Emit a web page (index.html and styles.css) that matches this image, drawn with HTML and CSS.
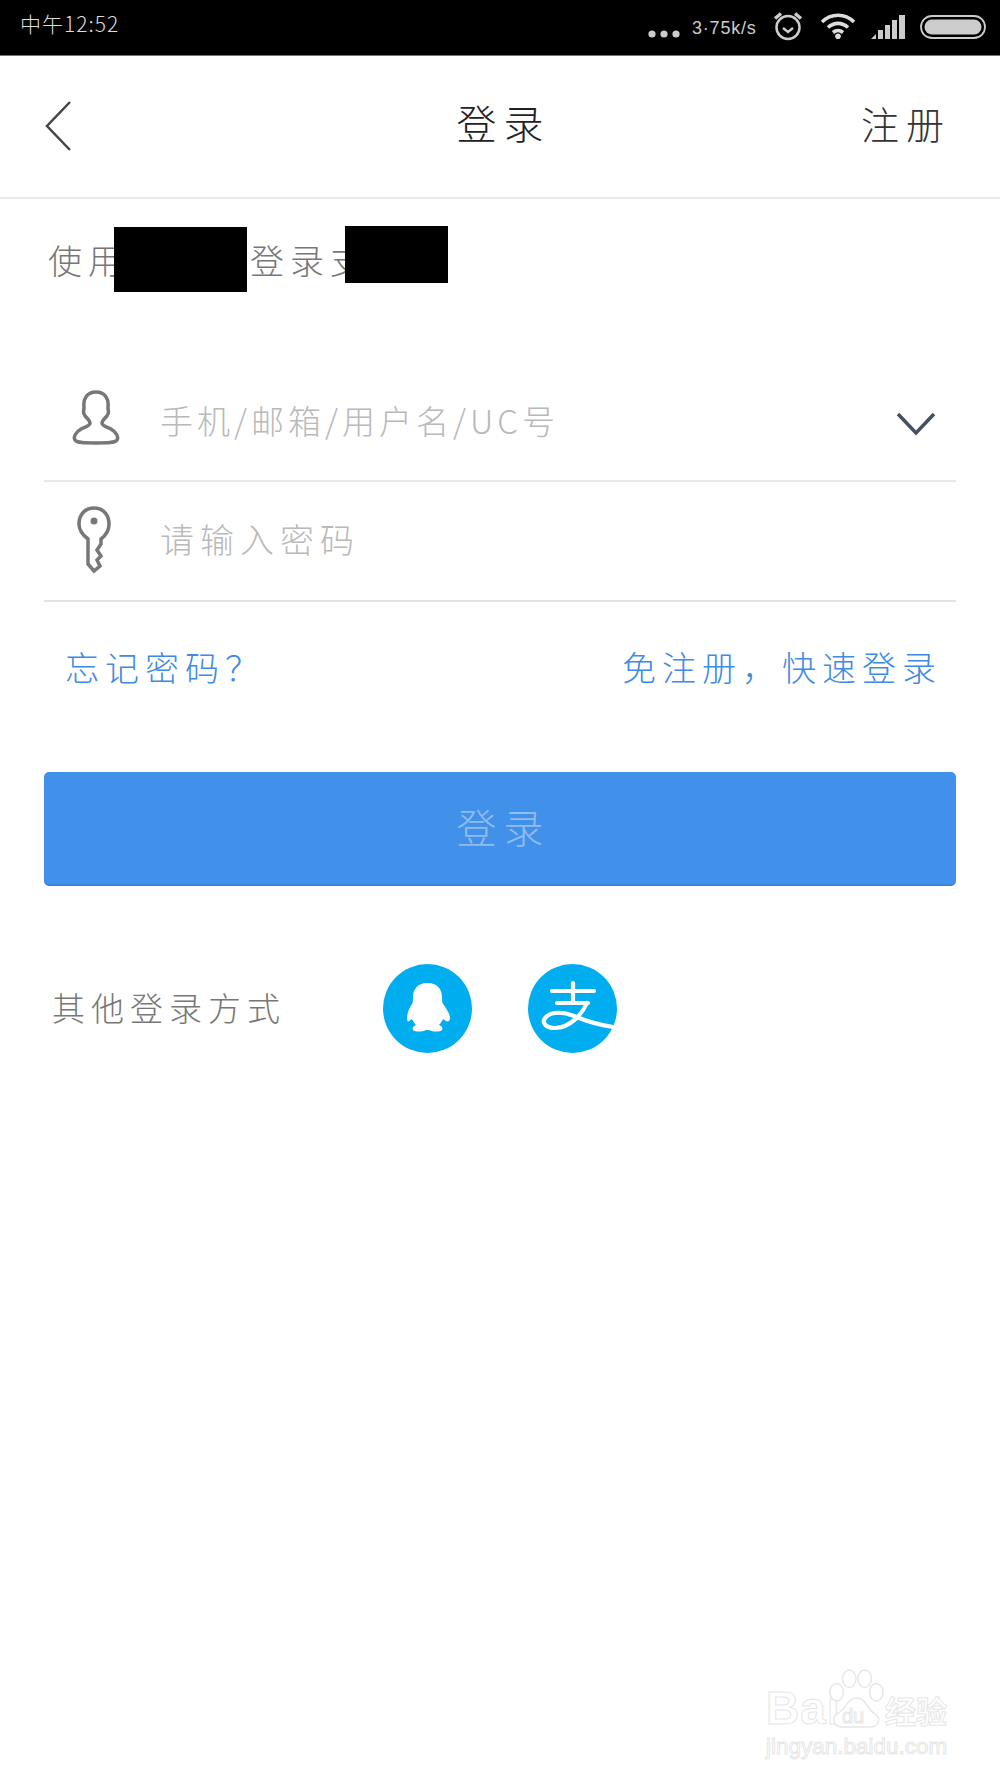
FILE: index.html
```html
<!DOCTYPE html>
<html lang="zh">
<head>
<meta charset="utf-8">
<title>登录</title>
<link rel="stylesheet" href="styles.css">
</head>
<body>
<div class="page">
  <header class="status">
    <div class="time">中午12:52</div>
    <div class="status-right">
      <svg class="dots" viewBox="0 0 32 8"><circle cx="4" cy="4" r="3.6"/><circle cx="16" cy="4" r="3.6"/><circle cx="28" cy="4" r="3.6"/></svg>
      <span class="speed">3·75k/s</span>
      <svg class="alarm" viewBox="0 0 30 30"><circle cx="15" cy="16.500" r="11.500"/><path d="M10 17l5 4 5-4"/><path class="thick" d="M2 7.500L8 2.500M28 7.500L22 2.500"/></svg>
      <svg class="wifi" viewBox="0 0 36 26"><path d="M2 9C11 0 25 0 34 9"/><path d="M8 14.500C14 9 22 9 28 14.500"/><path d="M13 19.500C16 17 20 17 23 19.500"/><circle cx="18" cy="23.200" r="2.800"/></svg>
      <svg class="signal" viewBox="0 0 35 24"><path d="M0 24L5 19V24Z"/><rect x="7" y="15" width="5" height="9"/><rect x="14" y="10" width="5" height="14"/><rect x="21" y="5" width="5" height="19"/><rect x="28" y="0" width="6" height="24"/></svg>
      <svg class="battery" viewBox="0 0 66 24"><rect x="1" y="1" width="64" height="22" rx="11"/><rect class="fill" x="4.500" y="4.500" width="57" height="15" rx="7.500"/></svg>
    </div>
  </header>

  <nav class="nav">
    <svg class="back" viewBox="0 0 26 50"><path d="M25 1L2 25L25 49"/></svg>
    <h1 class="title">登录</h1>
    <a class="register">注册</a>
  </nav>

  <section class="intro">
    <span>使用</span><span class="intro-gap"></span><span>登录支</span>
    <div class="mask mask-a"></div>
    <div class="mask mask-b"></div>
  </section>

  <form class="form">
    <div class="field field-user">
      <svg class="field-icon" viewBox="0 0 48 56"><path d="M24 2C15 2 11 9 12 17C12 20 11 22 12 24C13 27 18 30 18 33C18 36 13 37 9 39C4 42 1 47 3 50C5 53 12 53 24 53C36 53 43 53 45 50C47 47 44 42 39 39C35 37 30 36 30 33C30 30 35 27 36 24C37 22 36 20 36 17C37 9 33 2 24 2Z"/></svg>
      <span class="placeholder">手机/邮箱/用户名/UC号</span>
      <svg class="caret" viewBox="0 0 40 24"><path d="M2 2L20 21L38 2"/></svg>
    </div>
    <div class="field field-pass">
      <svg class="field-icon" viewBox="0 0 48 68"><path d="M24 2C13 2 9 11 9 18C9 26 14 30 18 33V58L24 65L30 60L27 54L31 50L27 44L31 38V33C35 30 39 26 39 18C39 11 35 2 24 2Z"/><circle class="dot" cx="24" cy="15" r="3.500"/></svg>
      <span class="placeholder">请输入密码</span>
    </div>
  </form>

  <div class="links">
    <a class="link link-forgot">忘记密码？</a>
    <a class="link link-fast">免注册，快速登录</a>
  </div>

  <button class="submit" type="button">登录</button>

  <div class="others">
    <span class="others-label">其他登录方式</span>
    <div class="others-icons">
      <svg class="social" viewBox="0 0 89 89"><circle class="disc" cx="44.500" cy="44.500" r="44.500"/><path class="glyph" d="M44.500 19C34 19 30 26 30 33C30 36 30 38 29 40C26 44 24 50 24 54C24 57 25 58 26 57L29 55C30 57 31 59 33 61C30 62 29 64 30 66C32 68 39 68 43 66L46 66C50 68 57 68 59 66C60 64 59 62 56 61C58 59 59 57 60 55L63 57C65 58 67 57 67 54C67 50 63 44 60 40C59 38 59 36 59 33C59 26 55 19 44.500 19Z"/></svg>
      <svg class="social" viewBox="0 0 89 89"><circle class="disc" cx="44.500" cy="44.500" r="44.500"/><path class="zhi" d="M24 27H66M45 19V39M29 39H60"/><path class="zhi" d="M59 39C54 50 42 64 27 64C17 64 13 58 18 53C24 47 36 48 46 52C58 57 72 61 85 63"/></svg>
    </div>
  </div>

  <div class="watermark">
    <div class="wm-top">
      <span class="wm-bai">Bai</span>
      <svg class="wm-paw" viewBox="0 0 58 62"><ellipse cx="9" cy="24" rx="7" ry="9"/><ellipse cx="22" cy="10" rx="7" ry="9"/><ellipse cx="38" cy="10" rx="7" ry="9"/><ellipse cx="50" cy="24" rx="7" ry="9"/><path d="M30 30C20 30 18 42 10 46C3 50 5 60 16 60C24 60 36 60 44 60C54 60 55 50 48 46C41 42 39 30 30 30Z"/></svg>
      <span class="wm-du">du</span>
      <span class="wm-cn">经验</span>
    </div>
    <div class="wm-url">jingyan.baidu.com</div>
  </div>
</div>
</body>
</html>
```

FILE: styles.css
```css
* { box-sizing: border-box; }
html, body { margin: 0; padding: 0; background: #fff; }
body { font-family: "Noto Sans CJK SC", "Noto Sans", sans-serif; font-weight: 300; }
.page { position: relative; width: 1000px; height: 1778px; overflow: hidden; background: #fff; }

.status { height: 56px; background: #000; border-bottom: 1px solid #777; display: flex; align-items: center; justify-content: space-between; padding: 0 14px 4px 20px; }
.time { color: #ddd; font-size: 21px; line-height: 28px; letter-spacing: 1px; margin-top: -5px; }
.status-right { display: flex; align-items: center; }
.dots { width: 32px; height: 8px; fill: #ccc; margin-top: 17px; }
.speed { color: #ccc; font-size: 18px; line-height: 24px; margin-left: 12px; width: 65px; font-family: "Liberation Sans", sans-serif; font-weight: 400; margin-top: 4px; letter-spacing: 0.8px; white-space: nowrap; }
.alarm { width: 30px; height: 30px; margin-left: 16px; fill: none; stroke: #ccc; stroke-width: 2.500; }
.alarm .thick { stroke-width: 3.500; }
.wifi { width: 36px; height: 26px; margin-left: 17px; fill: none; stroke: #ddd; stroke-width: 3.600; }
.wifi circle { fill: #ddd; stroke: none; }
.signal { width: 35px; height: 24px; margin-left: 15px; fill: #ccc; margin-top: 2px; }
.battery { width: 66px; height: 24px; margin-left: 14px; fill: none; stroke: #ccc; stroke-width: 1.800; margin-top: 2px; }
.battery .fill { fill: #ccc; stroke: none; }

.nav { height: 143px; border-bottom: 2px solid #e9e9e9; display: flex; align-items: center; justify-content: space-between; position: relative; padding: 0 55px 7px 45px; }
.back { width: 26px; height: 50px; fill: none; stroke: #444; stroke-width: 2.500; margin-top: 6px; }
.title { position: absolute; left: 0; right: 0; top: 38px; margin: 0; text-align: center; font-size: 40px; line-height: 56px; font-weight: 300; color: #222; letter-spacing: 7px; padding-left: 7px; }
.register { font-size: 38px; line-height: 52px; color: #333; letter-spacing: 7px; margin-right: -6px; }

.intro { position: relative; height: 157px; padding: 39px 0 0 48px; font-size: 34px; line-height: 44px; color: #777; letter-spacing: 6px; display: flex; align-items: flex-start; }
.intro-gap { width: 122px; }
.mask { position: absolute; background: #000; }
.mask-a { left: 114px; top: 28px; width: 133px; height: 65px; }
.mask-b { left: 345px; top: 27px; width: 103px; height: 57px; }

.form { margin: 0 44px; }
.field { display: flex; align-items: center; position: relative; padding-left: 116px; }
.field-user { height: 126px; border-bottom: 2px solid #e8e8e8; padding-top: 3px; }
.field-pass { height: 120px; border-bottom: 2px solid #e2e2e2; padding-bottom: 4px; }
.field-icon { position: absolute; fill: none; stroke: #777; stroke-width: 3.500; }
.field-user .field-icon { left: 28px; top: 34px; width: 48px; height: 56px; }
.field-pass .field-icon { left: 26px; top: 24px; width: 48px; height: 68px; }
.field-icon .dot { fill: #777; stroke: none; }
.placeholder { font-size: 34px; line-height: 44px; color: #b9b9b9; letter-spacing: 6px; }
.field-user .placeholder { font-size: 33px; letter-spacing: 4px; }
.caret { position: absolute; right: 20px; top: 56px; width: 40px; height: 24px; fill: none; stroke: #47505f; stroke-width: 3.500; }

.links { display: flex; justify-content: space-between; padding: 45px 64px 85px 65px; height: 170px; }
.link { font-size: 34px; line-height: 40px; color: #3f8ae5; letter-spacing: 6px; }
.link-fast { font-size: 34px; letter-spacing: 6px; margin-right: -6px; }

.submit { display: block; width: 912px; height: 114px; margin: 0 44px; border: 0; border-bottom: 2px solid #3a83e0; border-radius: 5px; background: #4190ea; color: #8fbcf2; font: inherit; font-size: 40px; letter-spacing: 7px; padding: 0 0 4px 7px; }

.others { display: flex; align-items: center; height: 89px; margin-top: 78px; padding-left: 52px; }
.others-label { width: 331px; font-size: 33px; line-height: 44px; color: #777; letter-spacing: 6px; white-space: nowrap; margin-top: -4px; }
.others-icons { display: flex; gap: 56px; }
.social { width: 89px; height: 89px; display: block; }
.disc { fill: #00aeef; }
.glyph { fill: #fff; }
.zhi { fill: none; stroke: #fff; stroke-width: 4.200; stroke-linecap: round; }

.watermark { position: absolute; left: 766px; top: 1668px; width: 182px; color: #fff; font-family: "Liberation Sans", sans-serif; font-weight: 700; -webkit-text-stroke: 1px #e6e6e6; }
.wm-top { position: relative; display: flex; align-items: flex-end; height: 62px; }
.wm-bai { font-size: 46px; line-height: 44px; width: 62px; letter-spacing: 1px; }
.wm-paw { width: 56px; height: 62px; fill: #fff; stroke: #e6e6e6; stroke-width: 1.500; flex: none; }
.wm-du { position: absolute; left: 76px; top: 37px; font-size: 20px; line-height: 22px; font-weight: 400; }
.wm-cn { font-family: "Noto Sans CJK SC", sans-serif; font-size: 31px; line-height: 40px; margin-left: 1px; white-space: nowrap; }
.wm-url { font-size: 22.500px; line-height: 28px; margin-top: 3px; font-weight: 400; white-space: nowrap; }
```
